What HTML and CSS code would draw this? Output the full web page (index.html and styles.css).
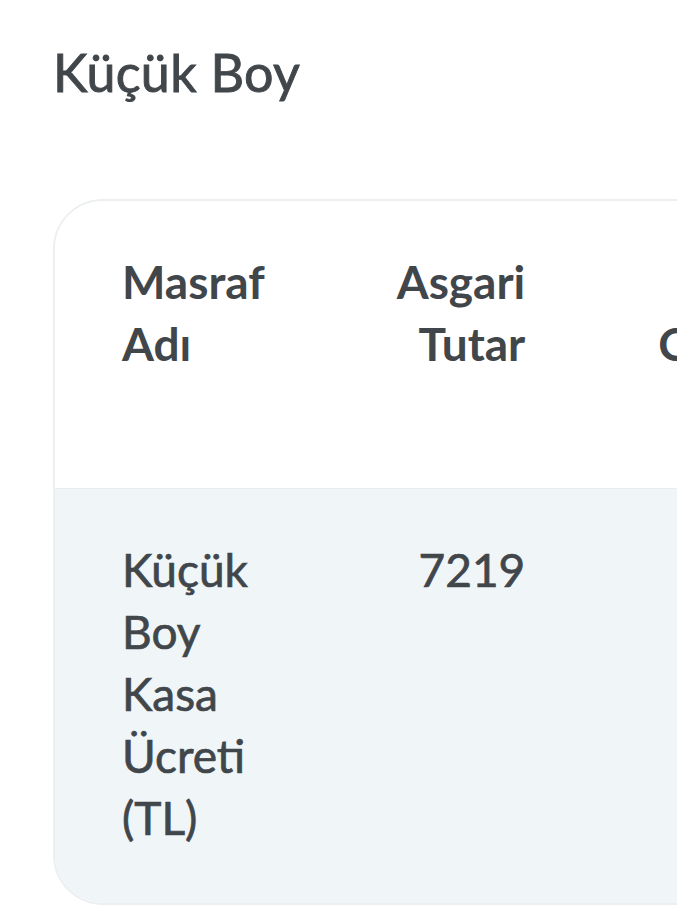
FILE: index.html
```html
<!DOCTYPE html>
<html lang="tr">
<head>
<meta charset="utf-8">
<title>Küçük Boy</title>
<link rel="stylesheet" href="styles.css">
</head>
<body>
<main class="page">
  <h2 class="title">Küçük Boy</h2>
  <div class="table-wrap">
    <div class="card">
      <table class="fees">
        <thead>
          <tr>
            <th class="col-name top">Masraf Adı</th>
            <th class="col-num top">Asgari Tutar</th>
            <th class="col-extra">Cinsi</th>
            <th class="col-extra top">Son Güncelleme Tarihi</th>
          </tr>
        </thead>
        <tbody>
          <tr>
            <td class="col-name">Küçük Boy Kasa Ücreti (TL)</td>
            <td class="col-num">7219</td>
            <td class="col-num">%0</td>
            <td class="col-extra">2024</td>
          </tr>
        </tbody>
      </table>
    </div>
  </div>
</main>
</body>
</html>
```

FILE: styles.css
```css
html, body {
  margin: 0;
  padding: 0;
  background: #ffffff;
}

body {
  font-family: Lato, "Open Sans", "Liberation Sans", sans-serif;
  color: #41464b;
  overflow-x: hidden;
}

.page {
  padding: 41px 0 0 53px;
}

.title {
  margin: 0 0 96px 0;
  font-size: 52px;
  line-height: 1.2;
  font-weight: 400;
  letter-spacing: 0.3px;
  -webkit-text-stroke: 0.9px #41464b;
  color: #41464b;
}

.table-wrap {
  overflow: hidden;
}

.card {
  display: inline-block;
  border: 2px solid #eceff1;
  border-radius: 50px;
  overflow: hidden;
  background: #ffffff;
}

.fees {
  border-collapse: collapse;
  width: min-content;
  font-size: 46px;
  line-height: 62px;
}

.fees th,
.fees td {
  padding: 50px 66px 51px 67px;
  vertical-align: top;
}

.fees th {
  font-weight: 700;
  background: #ffffff;
}

.fees th.col-extra {
  vertical-align: middle;
}

.fees th.top {
  vertical-align: top;
}

.fees tbody tr {
  background: #f0f5f7;
  border-top: 1px solid #e8edf0;
}

.fees td {
  font-weight: 400;
  -webkit-text-stroke: 0.7px #41464b;
  padding-top: 50px;
  padding-bottom: 54px;
}

.col-name {
  text-align: left;
}

.col-num {
  text-align: right;
}

.col-extra {
  text-align: left;
}
```
